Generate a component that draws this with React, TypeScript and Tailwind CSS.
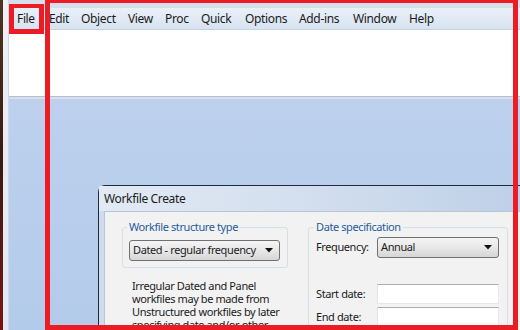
import { ReactNode } from "react";

const menuItems: { label: string; w: string }[] = [
  { label: "File", w: "w-[32px]" },
  { label: "Edit", w: "w-[32px]" },
  { label: "Object", w: "w-[47px]" },
  { label: "View", w: "w-[37px]" },
  { label: "Proc", w: "w-[36px]" },
  { label: "Quick", w: "w-[44px]" },
  { label: "Options", w: "w-[54px]" },
  { label: "Add-ins", w: "w-[54px]" },
  { label: "Window", w: "w-[56px]" },
  { label: "Help", w: "w-[37px]" },
];

const Arrow = () => (
  <svg width="8" height="5" viewBox="0 0 8 5" className="shrink-0">
    <path d="M0 0h8L4 4.5z" fill="#111" />
  </svg>
);

const Combo = ({ value, w }: { value: string; w: string }) => (
  <div
    className={`${w} h-[21px] flex items-center justify-between pl-[3px] pr-[6px] rounded-[3px] border border-[#707070] bg-gradient-to-b from-[#f4f4f4] via-[#e8e8e8] to-[#d6d6d6]`}
  >
    <span className="whitespace-nowrap">{value}</span>
    <Arrow />
  </div>
);

const TextBox = () => (
  <div className="w-[122px] h-[20px] bg-white border border-[#e3e9ef] border-t-[#abadb3] border-l-[#e2e3ea]" />
);

const GroupBox = ({
  title,
  className,
  children,
}: {
  title: string;
  className: string;
  children: ReactNode;
}) => (
  <fieldset className={`border border-[#d5dfe5] rounded-[3px] ${className}`}>
    <legend className="-ml-[2px] px-[2px] leading-[14px] text-[#1e5c9c]">
      {title}
    </legend>
    {children}
  </fieldset>
);

export default function App() {
  return (
    <div
      className="relative w-[520px] h-[330px] overflow-hidden flex text-[12px] tracking-[-0.35px] text-[#1b1b1b]"
      style={{ fontFamily: '"Noto Sans", "Open Sans", sans-serif' }}
    >
      {/* window frame on the left */}
      <div className="w-[3px] bg-gradient-to-b from-[#4a3522] via-[#3a1a12] to-[#7a1212]" />
      <div className="w-[6px] bg-gradient-to-b from-[#eef1f5] to-[#e2e9f4] border-r border-[#cfd9e6]" />

      <div className="flex-1 flex flex-col min-w-0">
        <div className="h-[8px] bg-[#d6e0ed]" />

        {/* Menu bar */}
        <div className="h-[22px] flex items-center bg-gradient-to-b from-[#e9f0f8] to-[#d8e3f1] border-b border-[#c6d2e1]">
          <div className="w-[2px]" />
          {menuItems.map((m) => (
            <div key={m.label} className={`${m.w} pl-[6px] whitespace-nowrap`}>
              {m.label}
            </div>
          ))}
        </div>

        {/* Toolbar / command area */}
        <div className="h-[66px] bg-white" />
        <div className="h-[1px] bg-[#b3bfcd]" />
        <div className="h-[2px] bg-[#d6dfea]" />

        {/* MDI area */}
        <div className="flex-1 bg-gradient-to-b from-[#bdd1ee] to-[#b3cbea] pl-[89px] pt-[86px] overflow-hidden">
          <div className="w-[440px] h-[200px] flex flex-col border-t border-l border-[#1d2c3c] rounded-tl-[7px] bg-[#cfdcee]">
            <div className="h-[25px] flex items-center pl-[5px] bg-gradient-to-r from-[#e2eaf4] via-[#d2deee] to-[#bccfe7]">
              Workfile Create
            </div>
            <div className="flex-1 ml-[5px] bg-[#f2f2f2] border-l border-t border-[#b7c5d6] flex pl-[17px] pt-[8px] gap-[20px] text-[11px] tracking-[-0.4px]">
              {/* Left column */}
              <div className="w-[166px] shrink-0 flex flex-col">
                <GroupBox title="Workfile structure type" className="w-[166px] pl-[6px] pb-[6px]">
                  <div className="mt-[6px]">
                    <Combo value="Dated - regular frequency" w="w-[151px]" />
                  </div>
                </GroupBox>
                <p className="ml-[10px] mt-[11px] leading-[13px] whitespace-nowrap">
                  Irregular Dated and Panel
                  <br />
                  workfiles may be made from
                  <br />
                  Unstructured workfiles by later
                  <br />
                  specifying date and/or other
                </p>
              </div>

              {/* Right column */}
              <GroupBox title="Date specification" className="w-[200px] h-[140px] shrink-0 pl-[7px]">
                <div className="mt-[3px] flex items-center">
                  <span className="w-[61px]">Frequency:</span>
                  <Combo value="Annual" w="w-[122px]" />
                </div>
                <div className="mt-[26px] flex items-center">
                  <span className="w-[61px]">Start date:</span>
                  <TextBox />
                </div>
                <div className="mt-[3px] flex items-center">
                  <span className="w-[61px]">End date:</span>
                  <TextBox />
                </div>
              </GroupBox>
            </div>
          </div>
        </div>
      </div>

      {/* Red annotation boxes */}
      <div className="absolute left-[9px] top-[4px] w-[35px] h-[30px] border-[5px] border-t-[4px] border-[#ec1c24]" />
      <div className="absolute left-[45px] top-[-2px] w-[473px] h-[332px] border-[5px] border-[#ec1c24]" />
    </div>
  );
}
